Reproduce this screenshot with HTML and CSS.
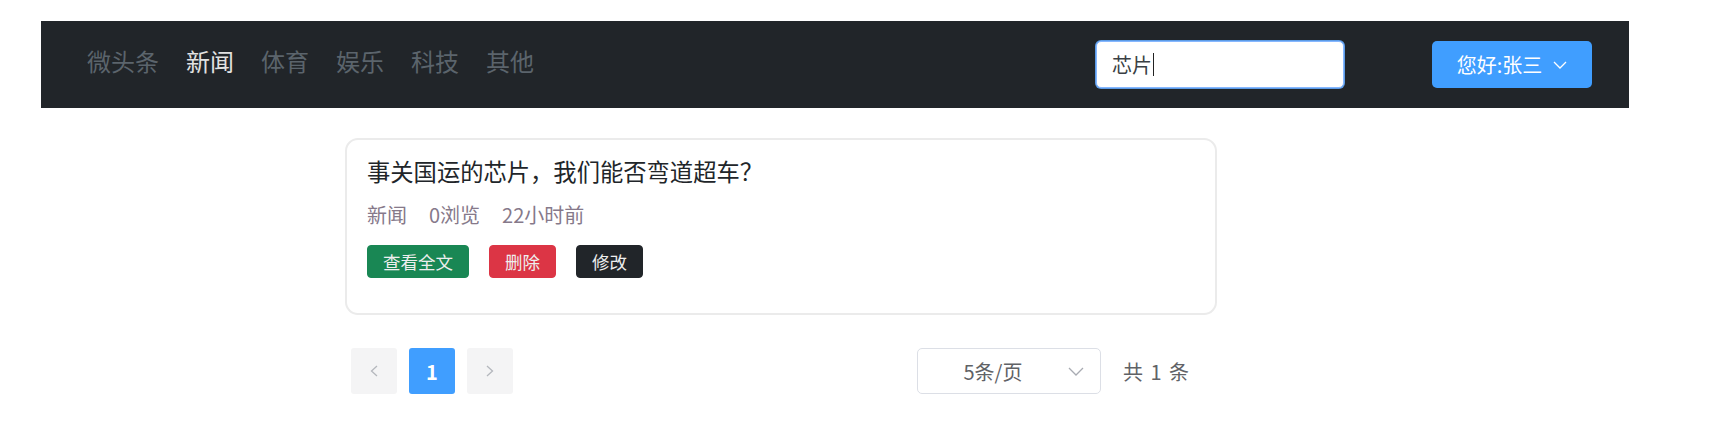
FILE: index.html
```html
<!DOCTYPE html>
<html lang="zh-CN">
<head>
<meta charset="utf-8">
<title>微头条</title>
<link rel="stylesheet" href="styles.css">
</head>
<body>
<header class="topbar">
  <nav class="nav">
    <a class="nav-brand" href="#">微头条</a>
    <a class="nav-link active" href="#">新闻</a>
    <a class="nav-link" href="#">体育</a>
    <a class="nav-link" href="#">娱乐</a>
    <a class="nav-link" href="#">科技</a>
    <a class="nav-link" href="#">其他</a>
  </nav>
  <div class="search">
    <span class="search-text">芯片</span><span class="caret"></span>
  </div>
  <button class="user-btn">您好:张三
    <svg class="user-arrow" width="14" height="8" viewBox="0 0 14 8"><polyline points="1,1 7,7 13,1" fill="none" stroke="#fff" stroke-width="1.3"/></svg>
  </button>
</header>

<main class="main">
  <article class="card">
    <h5 class="card-title">事关国运的芯片，我们能否弯道超车？</h5>
    <div class="meta">
      <span>新闻</span>
      <span>0浏览</span>
      <span>22小时前</span>
    </div>
    <div class="actions">
      <button class="btn btn-green">查看全文</button>
      <button class="btn btn-red">删除</button>
      <button class="btn btn-dark">修改</button>
    </div>
  </article>

  <div class="pager">
    <button class="pg-btn pg-arrow">
      <svg width="8" height="12" viewBox="0 0 8 12"><polyline points="7,1 1.5,6 7,11" fill="none" stroke="#b4b7bd" stroke-width="1.3"/></svg>
    </button>
    <button class="pg-btn pg-active">1</button>
    <button class="pg-btn pg-arrow">
      <svg width="8" height="12" viewBox="0 0 8 12"><polyline points="1,1 6.5,6 1,11" fill="none" stroke="#b4b7bd" stroke-width="1.3"/></svg>
    </button>
    <div class="sizes">
      <span class="sizes-text">5条/页</span>
      <svg class="sizes-arrow" width="16" height="9" viewBox="0 0 16 9"><polyline points="1,1 8,8 15,1" fill="none" stroke="#a8abb2" stroke-width="1.3"/></svg>
    </div>
    <span class="total">共 1 条</span>
  </div>
</main>
</body>
</html>
```

FILE: styles.css
```css
* { box-sizing: border-box; }

body {
  margin: 0;
  background: #fff;
  font-family: "Noto Sans CJK SC", "Noto Sans", sans-serif;
  color: #212529;
}

.topbar {
  margin: 21px 0 0 41px;
  width: 1588px;
  height: 87px;
  background: #212529;
  display: flex;
  align-items: center;
  padding: 0 37px 0 46px;
}

.nav {
  display: flex;
  gap: 27px;
  margin-bottom: 8px;
}

.nav-brand,
.nav-link {
  font-size: 24px;
  line-height: 36px;
  color: #5b646c;
  text-decoration: none;
}

.nav-link.active {
  color: #e2e2e2;
}

.search {
  margin-left: auto;
  width: 248px;
  height: 47px;
  background: #fff;
  border: 1px solid #86b7fe;
  box-shadow: 0 0 0 1px #5c9be6;
  border-radius: 5px;
  display: flex;
  align-items: center;
  padding: 0 15px;
  font-size: 20px;
  color: #3a3f44;
}

.caret {
  display: inline-block;
  width: 1px;
  height: 23px;
  background: #222;
  margin-left: 1px;
}

.user-btn {
  margin-left: 88px;
  width: 160px;
  height: 47px;
  border: none;
  border-radius: 5px;
  background: #409eff;
  color: #fff;
  font-family: inherit;
  font-size: 20px;
  display: flex;
  align-items: center;
  justify-content: center;
  gap: 11px;
  padding: 0;
}

.main {
  margin-left: 345px;
  width: 872px;
}

.card {
  margin-top: 30px;
  border: 2px solid #ebebeb;
  border-radius: 13px;
  padding: 16px 20px 35px;
}

.card-title {
  margin: 0;
  font-size: 23.3px;
  font-weight: normal;
  line-height: 30px;
  color: #212529;
}

.meta {
  margin-top: 14px;
  display: flex;
  gap: 22px;
  font-size: 20px;
  line-height: 30px;
  color: #86798a;
}

.actions {
  margin-top: 15px;
  display: flex;
  gap: 20px;
}

.btn {
  height: 33px;
  padding: 0 15px;
  border: 1px solid transparent;
  border-radius: 4px;
  font-family: inherit;
  font-size: 17.5px;
  line-height: 31px;
  color: #eeeeee;
}

.btn-green { background: #198754; border-color: #198754; }
.btn-red { background: #dc3545; border-color: #dc3545; }
.btn-dark { background: #212529; border-color: #212529; }

.pager {
  margin-top: 33px;
  display: flex;
  align-items: center;
  padding-left: 6px;
}

.pg-btn {
  width: 46px;
  height: 46px;
  margin-right: 12px;
  border: none;
  border-radius: 3px;
  background: #f4f4f5;
  display: flex;
  align-items: center;
  justify-content: center;
  font-family: inherit;
  padding: 0;
}

.pg-active {
  background: #409eff;
  color: #fff;
  font-size: 20px;
  font-weight: bold;
}

.sizes {
  margin-left: auto;
  width: 184px;
  height: 46px;
  border: 1px solid #dcdfe6;
  border-radius: 5px;
  display: flex;
  align-items: center;
  padding: 0 16px 0 8px;
}

.sizes-text {
  flex: 1;
  text-align: center;
  font-size: 20px;
  color: #606266;
}

.sizes-arrow {
  margin-left: 8px;
}

.total {
  margin-left: 22px;
  margin-right: 28px;
  font-size: 20px;
  word-spacing: 3px;
  color: #606266;
}
```
